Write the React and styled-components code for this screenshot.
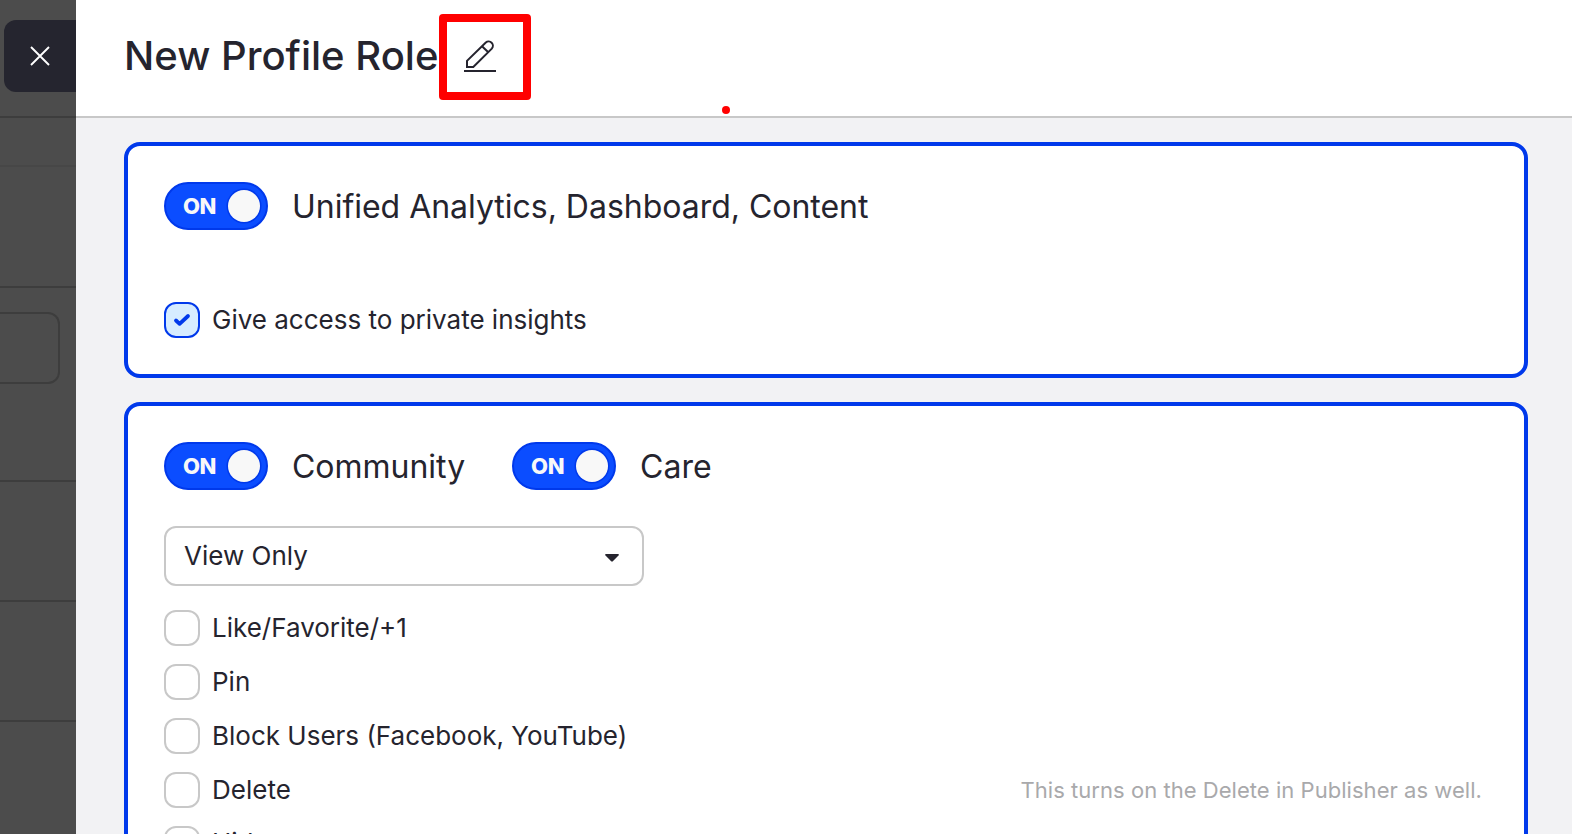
import React from "react";
import styled, { createGlobalStyle } from "styled-components";

const permissions = [
  { label: "Like/Favorite/+1" },
  { label: "Pin" },
  { label: "Block Users (Facebook, YouTube)" },
  { label: "Delete", note: "This turns on the Delete in Publisher as well." },
  { label: "Hide" },
];

const Switch = ({ label }) => (
  <SwitchField>
    <Track>
      <span>ON</span>
      <Knob />
    </Track>
    <h2>{label}</h2>
  </SwitchField>
);

const CheckRow = ({ label, note, checked }) => (
  <Row>
    <Box $checked={checked}>
      {checked && (
        <svg width="18" height="14" viewBox="0 0 18 14">
          <path d="M3 7.5 L6.6 10.8 L15 3" />
        </svg>
      )}
    </Box>
    <Label>{label}</Label>
    {note && <Note>{note}</Note>}
  </Row>
);

const App = () => {
  return (
    <Page>
      <GlobalStyle />
      {/* DIMMED PAGE */}
      <Backdrop>
        <TopStrip>
          <CloseButton aria-label="Close">
            <svg width="20" height="20" viewBox="0 0 20 20">
              <path d="M1 1 L19 19 M19 1 L1 19" />
            </svg>
          </CloseButton>
        </TopStrip>
        <Strip $height={49} $line="#474747" />
        <Strip $height={121} />
        <Strip $height={194}>
          <Field />
        </Strip>
        <Strip $height={120} />
        <Strip $height={120} />
      </Backdrop>

      {/* DRAWER */}
      <Drawer>
        <Header>
          <h1>New Profile Role</h1>
          <EditFrame>
            <svg width="32" height="32" viewBox="0 0 32 32">
              <path d="M3 27 V20.8 L21.8 2.6 A4.25 4.25 0 0 1 27.8 8.6 L9.3 27 Z" />
              <path d="M18 6.2 L24.3 12.3" />
              <path d="M0 31 H32" />
            </svg>
          </EditFrame>
          <Dot />
        </Header>

        <Content>
          <Card>
            <Switches $gap={72}>
              <Switch label="Unified Analytics, Dashboard, Content" />
            </Switches>
            <CheckRow label="Give access to private insights" checked />
          </Card>

          <Card>
            <Switches $gap={36}>
              <Switch label="Community" />
              <Switch label="Care" />
            </Switches>
            <Select>
              View Only
              <svg width="14" height="8" viewBox="0 0 14 8">
                <path d="M0.6 0 H13.4 L14 1 L7.6 7.6 H6.4 L0 1 Z" />
              </svg>
            </Select>
            <List>
              {permissions.map((item) => (
                <CheckRow key={item.label} {...item} />
              ))}
            </List>
          </Card>
        </Content>
      </Drawer>
    </Page>
  );
};

const GlobalStyle = createGlobalStyle`
  * {
    box-sizing: border-box;
    margin: 0;
    padding: 0;
  }

  body {
    font-family: Inter, "Liberation Sans", sans-serif;
    color: #25242e;
    overflow: hidden;
  }
`;

const Page = styled.div`
  display: flex;
  height: 834px;
  overflow: hidden;
`;

const Backdrop = styled.div`
  width: 76px;
  flex-shrink: 0;
  background: #4c4c4c;
`;

const Strip = styled.div`
  height: ${({ $height }) => $height}px;
  border-bottom: 2px solid ${({ $line }) => $line || "#3d3d3d"};
  padding-top: 24px;
`;

const TopStrip = styled.div`
  height: 118px;
  border-bottom: 2px solid #3d3d3d;
  padding: 20px 0 0 4px;
`;

const CloseButton = styled.button`
  display: flex;
  align-items: center;
  justify-content: center;
  width: 72px;
  height: 72px;
  border: none;
  border-radius: 12px 0 0 12px;
  background: #25252f;

  path {
    stroke: white;
    stroke-width: 1.9;
  }
`;

const Field = styled.div`
  width: 60px;
  height: 72px;
  border: 2px solid #3d3d3d;
  border-left: none;
  border-radius: 0 12px 12px 0;
`;

const Drawer = styled.main`
  flex: 1;
  background: #f2f2f4;
`;

const Header = styled.header`
  position: relative;
  display: flex;
  align-items: center;
  height: 118px;
  padding: 0 48px 4px;
  border-bottom: 2px solid #c8c8c8;
  background: white;

  h1 {
    width: 315px;
    font-size: 40px;
    font-weight: 550;
    letter-spacing: 0.02px;
    line-height: 48px;
    white-space: nowrap;
  }
`;

const EditFrame = styled.div`
  width: 92px;
  height: 86px;
  margin-top: 2px;
  padding: 18px 0 0 17px;
  border: 8px solid #ff0000;
  border-radius: 4px;

  svg {
    display: block;
  }

  path {
    fill: none;
    stroke: #25242e;
    stroke-width: 2;
  }
`;

const Dot = styled.i`
  position: absolute;
  left: 646px;
  top: 106px;
  width: 8px;
  height: 8px;
  border-radius: 50%;
  background: #ff0000;
`;

const Content = styled.div`
  display: flex;
  flex-direction: column;
  gap: 24px;
  padding: 24px 44px 0 48px;
`;

const Card = styled.section`
  padding: 36px;
  border: 4px solid #0039eb;
  border-radius: 16px;
  background: white;
`;

const Switches = styled.div`
  display: flex;
  gap: 47px;
  margin-bottom: ${({ $gap }) => $gap}px;
`;

const SwitchField = styled.div`
  display: flex;
  align-items: center;
  gap: 24px;
  height: 48px;

  h2 {
    padding-top: 2px;
    font-size: 32px;
    font-weight: 400;
    letter-spacing: -0.02px;
    line-height: 48px;
    white-space: nowrap;
  }
`;

const Track = styled.div`
  display: flex;
  align-items: center;
  justify-content: space-between;
  width: 104px;
  height: 48px;
  padding: 0 6px 0 17px;
  border: 2px solid #0039eb;
  border-radius: 24px;
  background: #0b4dff;

  span {
    color: #f8f8f8;
    font-size: 22px;
    font-weight: 800;
    letter-spacing: -0.4px;
  }
`;

const Knob = styled.div`
  width: 32px;
  height: 32px;
  border-radius: 50%;
  background: #f8f8f8;
  box-shadow: 0 0 0 1.5px #0039eb;
`;

const Row = styled.div`
  display: flex;
  align-items: center;
  height: 36px;
`;

const Box = styled.div`
  display: flex;
  align-items: center;
  justify-content: center;
  width: 36px;
  height: 36px;
  border: 2px solid ${({ $checked }) => ($checked ? "#0039eb" : "#c8c8c8")};
  border-radius: 12px;
  background: ${({ $checked }) => ($checked ? "#d6ecff" : "white")};

  path {
    fill: none;
    stroke: #0039eb;
    stroke-width: 3.8;
    stroke-linecap: round;
    stroke-linejoin: round;
  }
`;

const Label = styled.span`
  margin-left: 12px;
  font-size: 26px;
  line-height: 36px;
  white-space: nowrap;
`;

const Note = styled.span`
  margin-left: auto;
  padding-right: 6px;
  color: #a9a9ab;
  font-size: 22px;
  letter-spacing: 0.04px;
  white-space: nowrap;
`;

const Select = styled.div`
  display: flex;
  align-items: center;
  justify-content: space-between;
  width: 480px;
  height: 60px;
  margin-bottom: 24px;
  padding: 0 23px 2px 18px;
  border: 2px solid #c8c8c8;
  border-radius: 12px;
  font-size: 26px;

  svg {
    margin-top: 5px;
    fill: #25242e;
  }
`;

const List = styled.div`
  display: flex;
  flex-direction: column;
  gap: 18px;

  ${Row}:last-child ${Label} {
    padding-bottom: 2px;
  }
`;

export default App;
